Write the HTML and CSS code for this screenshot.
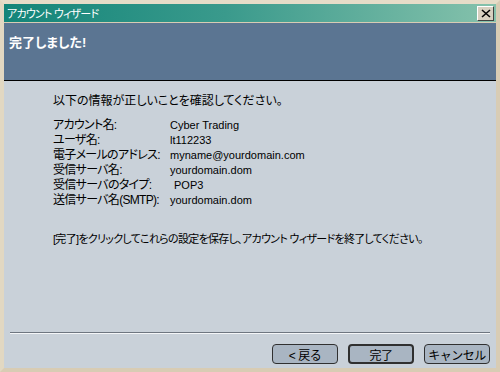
FILE: index.html
```html
<!DOCTYPE html>
<html>
<head>
    <title>アカウント ウィザード</title>
    <link rel="stylesheet" href="styles.css">
</head>
<body>
    <div class="window">
        <div class="titlebar">
            <span class="title">アカウント ウィザード</span>
            <span class="close">
                <svg width="10" height="9" viewBox="0 0 10 9"><path d="M1 1 L9 8 M9 1 L1 8" stroke="#000" stroke-width="1.6"/></svg>
            </span>
        </div>
        <div class="header">完了しました!</div>
        <div class="content">
            <p class="intro">以下の情報が正しいことを確認してください。</p>
            <table class="info">
                <tr><td>アカウント名:</td><td>Cyber Trading</td></tr>
                <tr><td>ユーザ名:</td><td>lt112233</td></tr>
                <tr><td>電子メールのアドレス:</td><td>myname@yourdomain.com</td></tr>
                <tr><td>受信サーバ名:</td><td>yourdomain.dom</td></tr>
                <tr><td>受信サーバのタイプ:</td><td class="pad">POP3</td></tr>
                <tr><td>送信サーバ名(SMTP):</td><td>yourdomain.dom</td></tr>
            </table>
            <p class="note">[完了]をクリックしてこれらの設定を保存し、アカウント ウィザードを終了してください。</p>
        </div>
        <div class="footer">
            <button class="btn">&lt; 戻る</button>
            <button class="btn default">完了</button>
            <button class="btn">キャンセル</button>
        </div>
    </div>
</body>
</html>
```

FILE: styles.css
```css
html, body {
    margin: 0;
    padding: 0;
}
body {
    font-family: "Liberation Sans", "Noto Sans CJK JP", sans-serif;
    font-feature-settings: "palt";
    font-size: 12px;
    background: #d8ccb4;
}
.window {
    width: 500px;
    height: 372px;
    box-sizing: border-box;
    border: 4px solid #d8ccb4;
    border-top-color: #e6dcc8;
    border-left-color: #e2d8c2;
    display: flex;
    flex-direction: column;
    background: #c9d1d9;
}
.titlebar {
    height: 18px;
    background: linear-gradient(to right, #138579, #3a9a8c 45%, #86c2ac);
    display: flex;
    align-items: center;
    justify-content: space-between;
    padding: 0 2px 0 3px;
    border-bottom: 1px solid #d8ccb4;
}
.title {
    color: #fff;
    font-size: 11px;
    letter-spacing: -0.8px;
}
.close {
    width: 15px;
    height: 13px;
    background: #d8d0c0;
    border: 1px solid;
    border-color: #fff #404040 #404040 #fff;
    display: flex;
    align-items: center;
    justify-content: center;
}
.header {
    height: 58px;
    background: #5b7592;
    border-bottom: 1px solid #000;
    color: #fff;
    font-weight: bold;
    font-size: 13px;
    padding: 9px 0 0 5px;
    box-sizing: border-box;
}
.content {
    flex: 1;
    padding: 10px 0 0 49px;
    color: #000;
    white-space: nowrap;
}
.intro {
    margin: 0 0 10px;
}
.info {
    border-collapse: collapse;
    margin-bottom: 22px;
}
.info td {
    padding: 0;
    height: 15px;
    line-height: 15px;
    vertical-align: top;
    font-size: 11px;
}
.info td:first-child {
    width: 117px;
    font-size: 12px;
    letter-spacing: -0.7px;
}
.info td.pad {
    padding-left: 4px;
}
.note {
    margin: 0;
    font-size: 11px;
    letter-spacing: -0.7px;
}
.footer {
    margin: 0 6px 4px;
    border-top: 1px solid #6e7680;
    box-shadow: inset 0 1px 0 #f4f6f8;
    display: flex;
    justify-content: flex-end;
    gap: 10px;
    padding: 11px 0 0;
}
.btn {
    width: 66px;
    height: 20px;
    font-family: inherit;
    font-size: 12px;
    letter-spacing: -0.5px;
    background: #a9b5c2;
    border: 1px solid #303030;
    border-radius: 4px;
    padding: 0;
    color: #000;
}
.btn.default {
    border-width: 2px;
}
```
